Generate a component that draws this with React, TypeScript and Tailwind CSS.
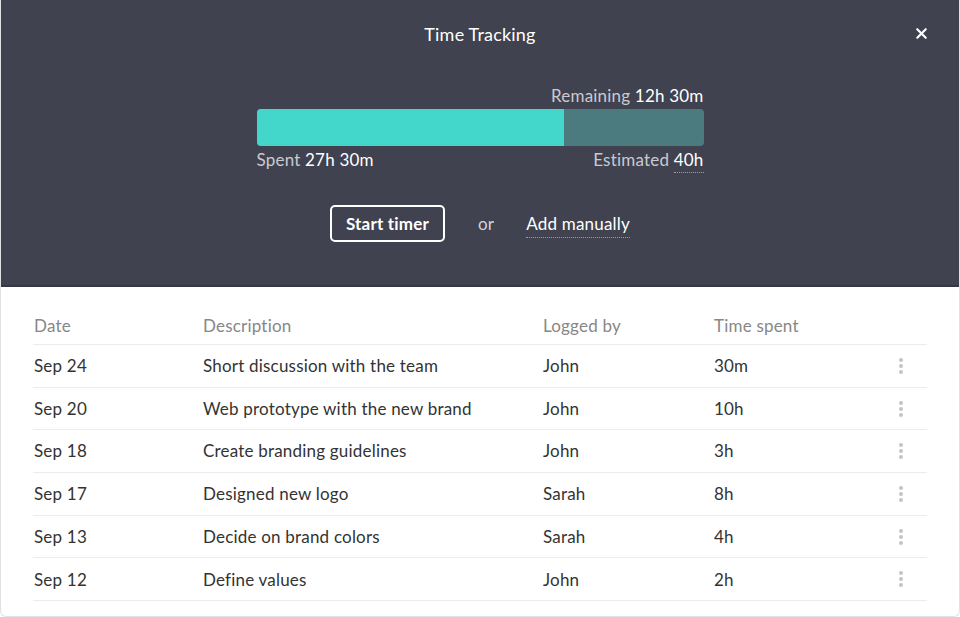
import { X } from 'lucide-react';

const rows = [
    { date: 'Sep 24', description: 'Short discussion with the team', by: 'John', time: '30m' },
    { date: 'Sep 20', description: 'Web prototype with the new brand', by: 'John', time: '10h' },
    { date: 'Sep 18', description: 'Create branding guidelines', by: 'John', time: '3h' },
    { date: 'Sep 17', description: 'Designed new logo', by: 'Sarah', time: '8h' },
    { date: 'Sep 13', description: 'Decide on brand colors', by: 'Sarah', time: '4h' },
    { date: 'Sep 12', description: 'Define values', by: 'John', time: '2h' },
];

function Kebab() {
    return (
        <div className="flex flex-col items-center gap-[2px]">
            <span className="block h-[4px] w-[4px] rounded-full bg-[#c4c4c4]" />
            <span className="block h-[4px] w-[4px] rounded-full bg-[#c4c4c4]" />
            <span className="block h-[4px] w-[4px] rounded-full bg-[#c4c4c4]" />
        </div>
    );
}

export default function App() {
    const spent = 27.5;
    const estimated = 40;
    return (
        <div className="w-[960px] h-[617px] bg-white overflow-hidden font-['Lato','Liberation_Sans',sans-serif] tracking-[0.2px]">
            <div className="h-[617px] rounded-b-[6px] border-x border-b border-[#e2e2e2] overflow-hidden">
                {/* header */}
                <div className="relative h-[287px] bg-[#40424f] border-b-2 border-[#363845] flex flex-col items-center">
                    <h1 className="mt-[22px] text-[18px] leading-[24px] text-white">Time Tracking</h1>
                    <button className="absolute right-[29px] top-[25px] text-white">
                        <X className="h-[17px] w-[17px]" strokeWidth={3} />
                    </button>

                    <div className="mt-[39px] w-[447px]">
                        <div className="flex justify-end text-[17px] leading-[21px] text-[#c9cad1]">
                            Remaining&nbsp;<span className="text-white">12h 30m</span>
                        </div>
                        <div className="mt-[3px] flex h-[37px] rounded-[4px] overflow-hidden bg-[#4b7b7e]">
                            <div className="h-full bg-[#43d6ca]" style={{ width: `${(spent / estimated) * 100}%` }} />
                        </div>
                        <div className="mt-[3px] flex justify-between text-[17px] leading-[21px] text-[#c9cad1]">
                            <span>Spent <span className="text-white">27h 30m</span></span>
                            <span>
                                Estimated <span className="text-white border-b border-dotted border-[#9a9ba5] pb-[2px]">40h</span>
                            </span>
                        </div>
                    </div>

                    <div className="mt-[35px] flex items-center">
                        <button className="h-[37px] w-[115px] rounded-[5px] border-2 border-white text-[17px] font-bold text-white">
                            Start timer
                        </button>
                        <span className="ml-[33px] text-[17px] text-[#d3d4da]">or</span>
                        <button className="ml-[32px] text-[17px] leading-[21px] text-white border-b border-dotted border-[#9a9ba5] pb-[3px] mt-[3px]">
                            Add manually
                        </button>
                    </div>
                </div>

                {/* table */}
                <div className="px-[32px] pt-[26px]">
                    <div className="grid grid-cols-[170px_340px_171px_1fr_40px] h-[32px] border-b border-[#ececec] text-[17px] text-[#878787] items-start">
                        <span className="pl-[1px]">Date</span>
                        <span>Description</span>
                        <span>Logged by</span>
                        <span>Time spent</span>
                        <span />
                    </div>
                    {rows.map((r) => (
                        <div
                            key={r.date}
                            className="grid grid-cols-[170px_340px_171px_1fr_40px] h-[42.7px] border-b border-[#ececec] items-center text-[17px] text-[#333333]"
                        >
                            <span className="pl-[1px]">{r.date}</span>
                            <span>{r.description}</span>
                            <span>{r.by}</span>
                            <span>{r.time}</span>
                            <span className="flex justify-start pl-[12px]">
                                <Kebab />
                            </span>
                        </div>
                    ))}
                </div>
            </div>
        </div>
    );
}
